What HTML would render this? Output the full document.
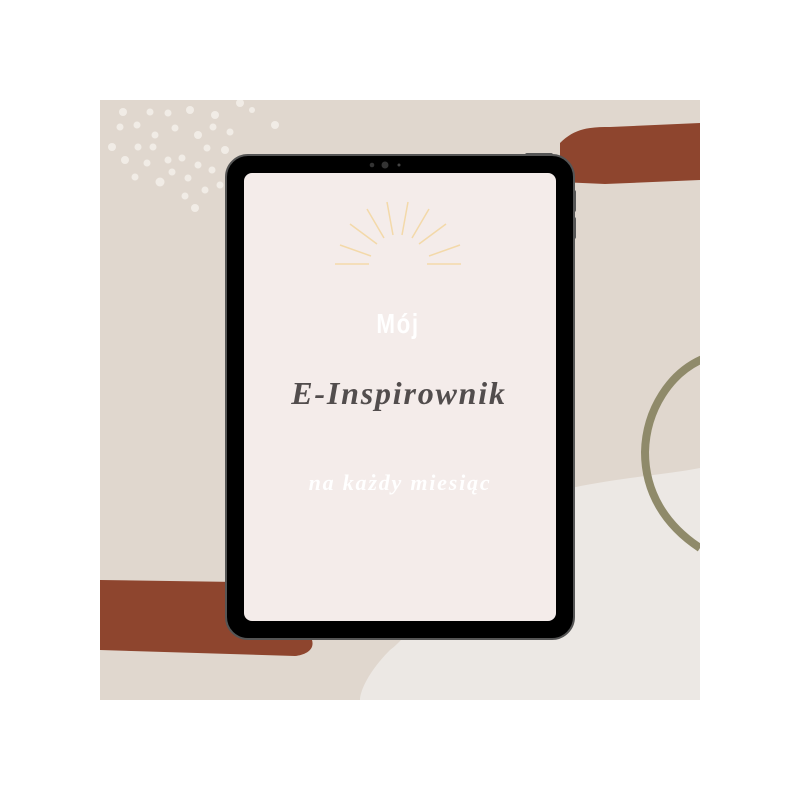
<!DOCTYPE html>
<html><head><meta charset="utf-8"><style>
body{margin:0;background:#fff;width:800px;height:800px;position:relative;overflow:hidden}
</style></head><body>
<svg width="800" height="800" style="position:absolute;left:0;top:0">
<defs><clipPath id="c"><rect x="100" y="100" width="600" height="600"/></clipPath></defs>
<g clip-path="url(#c)">
<rect x="100" y="100" width="600" height="600" fill="#e0d7ce"/>
<path d="M700 468 C650 478 560 480 490 515 C430 560 430 620 390 650 C370 670 360 690 360 700 L700 700 Z" fill="#ece8e4"/>
<path d="M560 143 C575 128 590 127 610 127 L700 123 L700 180 L605 184 L560 182 Z" fill="#8e452e"/>
<path d="M100 580 L305 583 L312 640 C315 650 305 655 295 656 L100 650 Z" fill="#8e452e"/>
<path d="M705 358 C670 372 646 410 645 452 C645 492 665 525 700 548" fill="none" stroke="#8f8a6a" stroke-width="8"/>
<g fill="#f1ece6">
<circle cx="123" cy="112" r="4"/><circle cx="137" cy="125" r="3.5"/><circle cx="150" cy="112" r="3.5"/><circle cx="168" cy="113" r="3.5"/><circle cx="190" cy="110" r="4"/><circle cx="215" cy="115" r="4"/><circle cx="240" cy="103" r="4"/><circle cx="252" cy="110" r="3"/><circle cx="120" cy="127" r="3.5"/><circle cx="155" cy="135" r="3.5"/><circle cx="175" cy="128" r="3.5"/><circle cx="198" cy="135" r="4"/><circle cx="213" cy="127" r="3.5"/><circle cx="230" cy="132" r="3.5"/><circle cx="275" cy="125" r="4"/><circle cx="112" cy="147" r="4"/><circle cx="138" cy="147" r="3.5"/><circle cx="153" cy="147" r="3.5"/><circle cx="182" cy="158" r="3.5"/><circle cx="207" cy="148" r="3.5"/><circle cx="225" cy="150" r="4"/><circle cx="125" cy="160" r="4"/><circle cx="147" cy="163" r="3.5"/><circle cx="168" cy="160" r="3.5"/><circle cx="188" cy="178" r="3.5"/><circle cx="198" cy="165" r="3.5"/><circle cx="212" cy="170" r="3.5"/><circle cx="135" cy="177" r="3.5"/><circle cx="160" cy="182" r="4.5"/><circle cx="172" cy="172" r="3.5"/><circle cx="205" cy="190" r="3.5"/><circle cx="220" cy="185" r="3.5"/><circle cx="185" cy="196" r="3.5"/><circle cx="195" cy="208" r="4"/></g>
</g>
<rect x="525" y="153" width="28" height="5" rx="2" fill="#555"/>
<rect x="572" y="190" width="4" height="22" rx="2" fill="#555"/>
<rect x="572" y="217" width="4" height="22" rx="2" fill="#555"/>
<rect x="226" y="155" width="348" height="484" rx="22" fill="#000" stroke="#555" stroke-width="2"/>
<rect x="244" y="173" width="312" height="448" rx="8" fill="#f4ecea"/>
<circle cx="372" cy="165" r="2.3" fill="#333"/><circle cx="385" cy="165" r="3.5" fill="#333"/><circle cx="399" cy="165" r="1.5" fill="#444"/>
<g stroke="#f3d9a9" stroke-width="1.5" fill="none">
<line x1="335" y1="264" x2="369" y2="264"/><line x1="427" y1="264" x2="461" y2="264"/>
<line x1="340" y1="245" x2="371" y2="256"/><line x1="460" y1="245" x2="429" y2="256"/>
<line x1="350" y1="224" x2="377" y2="244"/><line x1="446" y1="224" x2="419" y2="244"/>
<line x1="367" y1="209" x2="384" y2="238"/><line x1="429" y1="209" x2="412" y2="238"/>
<line x1="387" y1="202" x2="393" y2="235"/><line x1="408" y1="202" x2="402" y2="235"/>
</g>
<text x="398" y="333" text-anchor="middle" fill="#fff" font-family="Liberation Sans Narrow, Liberation Sans, sans-serif" font-size="28" font-weight="bold" letter-spacing="2" transform="translate(398 0) scale(0.8 1) translate(-398 0)">Mój</text>
<text x="399" y="404" text-anchor="middle" fill="#524d4d" font-family="Liberation Serif, serif" font-style="italic" font-weight="bold" font-size="32" letter-spacing="1.8">E-Inspirownik</text>
<text x="400" y="490" text-anchor="middle" fill="#fff" font-family="Liberation Serif, serif" font-style="italic" font-weight="bold" font-size="22" letter-spacing="1.8">na każdy miesiąc</text>
</svg>
</body></html>
